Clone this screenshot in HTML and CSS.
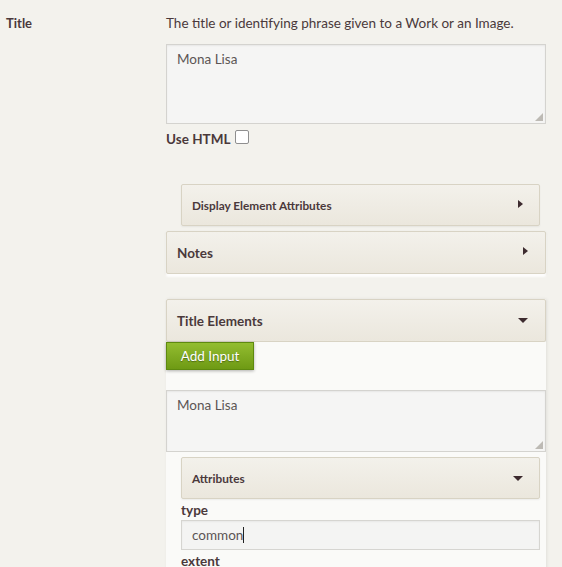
FILE: index.html
```html
<!DOCTYPE html>
<html>
<head>
<meta charset="utf-8">
<link rel="stylesheet" href="styles.css">
</head>
<body>
<div class="row">
  <div class="label">Title</div>
  <div class="field">
    <div class="desc">The title or identifying phrase given to a Work or an Image.</div>
    <div class="textarea tall">Mona Lisa<span class="grip"></span></div>
    <div class="usehtml">Use HTML <span class="check"></span></div>

    <div class="panel small inset first">
      <span>Display Element Attributes</span>
      <span class="arrow right"></span>
    </div>
    <div class="panel notes">
      <span>Notes</span>
      <span class="arrow right"></span>
    </div>

    <div class="group">
      <div class="panel open">
        <span>Title Elements</span>
        <span class="arrow down"></span>
      </div>
      <div class="group-body">
        <div class="btn">Add Input</div>
        <div class="textarea short">Mona Lisa<span class="grip"></span></div>
        <div class="inner">
          <div class="panel small">
            <span>Attributes</span>
            <span class="arrow down"></span>
          </div>
          <div class="flabel">type</div>
          <div class="input">common<span class="caret"></span></div>
          <div class="flabel">extent</div>
        </div>
      </div>
    </div>
  </div>
</div>
</body>
</html>
```
FILE: styles.css
```css
html, body {
  margin: 0;
  padding: 0;
}
body {
  background: #f3f2ed;
  font-family: Lato, "Open Sans", sans-serif;
  color: #4a393b;
  font-size: 13.5px;
  width: 562px;
  height: 567px;
  overflow: hidden;
}
.row {
  display: grid;
  grid-template-columns: 166px 380px;
  padding-top: 14px;
}
.label {
  font-weight: bold;
  padding-left: 6px;
  line-height: 18px;
  font-size: 13px;
}
.desc {
  line-height: 18px;
}
.textarea {
  position: relative;
  box-sizing: border-box;
  background: #f5f5f4;
  border: 1px solid #d4d3cf;
  box-shadow: inset 0 1px 2px rgba(0,0,0,0.06);
  color: #5c5555;
  padding: 6px 10px;
  line-height: 16px;
}
.tall {
  margin-top: 12px;
  height: 80px;
}
.short {
  margin-top: 20px;
  height: 62px;
}
.grip {
  position: absolute;
  right: 2px;
  bottom: 2px;
  width: 8px;
  height: 8px;
  background:
    radial-gradient(circle, #b9b6b0 0.7px, transparent 0.8px) 0 0 / 2px 2px;
  clip-path: polygon(100% 0, 100% 100%, 0 100%);
}
.usehtml {
  font-weight: bold;
  line-height: 18px;
  margin-top: 6px;
  display: flex;
  align-items: center;
  gap: 5px;
}
.check {
  display: inline-block;
  width: 12px;
  height: 12px;
  border: 1px solid #8f8f8f;
  border-radius: 2px;
  background: #fff;
  margin-top: -5px;
}
.panel {
  box-sizing: border-box;
  display: flex;
  justify-content: space-between;
  align-items: center;
  border: 1px solid #d8d3c4;
  border-radius: 2px;
  background: linear-gradient(#f3f1eb, #ebe7dd);
  font-weight: bold;
  height: 43px;
  padding: 0 17px 0 10px;
  box-shadow: 0 1px 2px rgba(0,0,0,0.06);
}
.panel.small {
  font-size: 11.8px;
  height: 42px;
  padding-left: 10px;
  padding-right: 16px;
}
.inset {
  margin-left: 15px;
  margin-right: 6px;
}
.first {
  margin-top: 36px;
}
.notes {
  margin-top: 5px;
  box-shadow: 0 3px 2px rgba(255,255,255,0.9), 0 1px 3px rgba(0,0,0,0.08);
}
.arrow {
  width: 0;
  height: 0;
  display: inline-block;
}
.arrow.right {
  border-top: 4px solid transparent;
  border-bottom: 4px solid transparent;
  border-left: 5px solid #3d2b2f;
  margin-top: -3px;
}
.arrow.down {
  border-left: 5px solid transparent;
  border-right: 5px solid transparent;
  border-top: 5px solid #3d2b2f;
}
.group {
  margin-top: 25px;
  box-shadow: 1px 0 3px rgba(0,0,0,0.08);
}
.group-body {
  background: #fafaf8;
  padding-bottom: 20px;
}
.btn {
  display: block;
  box-sizing: border-box;
  height: 28px;
  width: 88px;
  line-height: 26px;
  color: #fff;
  font-size: 13.5px;
  text-align: center;
  background: linear-gradient(#93bd30, #6e9a14);
  border: 1px solid #5e8a0f;
  box-shadow: 0 1px 3px rgba(0,0,0,0.3);
  text-shadow: 0 1px 1px rgba(0,0,0,0.35);
}
.inner {
  margin-left: 15px;
  margin-right: 6px;
  padding-top: 5px;
}
.flabel {
  font-weight: bold;
  line-height: 19px;
  margin-top: 2px;
}
.input {
  box-sizing: border-box;
  height: 30px;
  background: #f4f4f3;
  border: 1px solid #d6d5d1;
  box-shadow: inset 0 1px 2px rgba(0,0,0,0.05);
  padding: 0 10px;
  line-height: 28px;
  color: #5c5555;
  display: flex;
  align-items: center;
}
.caret {
  display: inline-block;
  width: 1px;
  height: 16px;
  background: #222;
}
```
